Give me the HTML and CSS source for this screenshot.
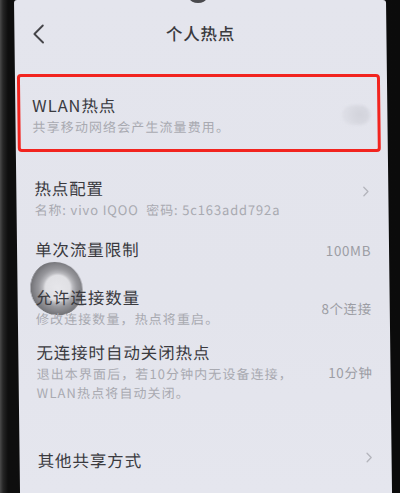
FILE: index.html
```html
<!DOCTYPE html>
<html lang="zh-CN">
<head>
<meta charset="utf-8">
<title>个人热点</title>
<link rel="stylesheet" href="styles.css">
</head>
<body>
<div class="phone">
  <div class="notch"></div>
  <div class="screen">
    <header class="header">
      <svg class="back" width="12" height="20" viewBox="0 0 12 20"><path d="M10.5 1.5 L2 10 L10.5 18.5" fill="none" stroke="#46464a" stroke-width="1.9" stroke-linecap="round" stroke-linejoin="round"/></svg>
      <h1 class="title">个人热点</h1>
      <span class="spacer"></span>
    </header>

    <div class="hl-box">
      <div class="item-text">
        <div class="item-title">WLAN热点</div>
        <div class="item-sub">共享移动网络会产生流量费用。</div>
      </div>
      <div class="toggle"></div>
    </div>

    <div class="row r-config">
      <div class="item-text">
        <div class="item-title">热点配置</div>
        <div class="item-sub sub-latin">名称: vivo IQOO&nbsp;&nbsp;密码: 5c163add792a</div>
      </div>
      <svg class="chev" width="7" height="11" viewBox="0 0 7 11"><path d="M1.5 1.2 L5.6 5.5 L1.5 9.8" fill="none" stroke="#b4b5bc" stroke-width="1.3" stroke-linecap="round" stroke-linejoin="round"/></svg>
    </div>

    <div class="row r-limit">
      <div class="item-text">
        <div class="item-title">单次流量限制</div>
      </div>
      <span class="value">100MB</span>
    </div>

    <div class="row r-count">
      <div class="item-text">
        <div class="item-title">允许连接数量</div>
        <div class="item-sub">修改连接数量，热点将重启。</div>
      </div>
      <span class="value">8个连接</span>
    </div>

    <div class="row r-auto">
      <div class="item-text">
        <div class="item-title">无连接时自动关闭热点</div>
        <div class="item-sub">退出本界面后，若10分钟内无设备连接，<br>WLAN热点将自动关闭。</div>
      </div>
      <span class="value">10分钟</span>
    </div>

    <div class="row r-other">
      <div class="item-text">
        <div class="item-title">其他共享方式</div>
      </div>
      <svg class="chev" width="7" height="11" viewBox="0 0 7 11"><path d="M1.5 1.2 L5.6 5.5 L1.5 9.8" fill="none" stroke="#b4b5bc" stroke-width="1.3" stroke-linecap="round" stroke-linejoin="round"/></svg>
    </div>

    <div class="touch"></div>
  </div>
</div>
</body>
</html>
```

FILE: styles.css
```css
html, body {
  margin: 0;
  padding: 0;
}
body {
  width: 400px;
  height: 493px;
  overflow: hidden;
  background: linear-gradient(to right, #4a4a4a 0, #262626 3px, #0e0e0e 8px, #0b0b0b 100%);
  font-family: "Noto Sans CJK SC", "Noto Sans", sans-serif;
}
.phone {
  position: relative;
  width: 400px;
  height: 493px;
  overflow: hidden;
}
.notch {
  position: absolute;
  left: 190px;
  top: -5px;
  width: 16px;
  height: 8px;
  border-radius: 50%;
  background: #4a4a4e;
  z-index: 3;
  filter: blur(0.6px);
}
.screen {
  position: relative;
  margin-left: 14px;
  width: 372px;
  height: 493px;
  overflow: hidden;
  background: linear-gradient(to bottom, #e4e5ed 0, #e3e4ec 60%, #e5e6ee 100%);
  transform: skewX(0.7deg);
  transform-origin: top left;
  border-radius: 3px 3px 0 0;
  color: #38383d;
}
.header {
  height: 66px;
  display: grid;
  grid-template-columns: 1fr auto 1fr;
  align-items: center;
  padding: 0 18px;
}
.back {
  display: block;
  margin-top: 2px;
}
.title {
  margin: 0;
  font-size: 16.5px;
  font-weight: 500;
  letter-spacing: 0.8px;
  color: #3a3a3f;
  line-height: 22px;
}
.hl-box {
  margin: 8px 0 0 2px;
  width: 363px;
  height: 78px;
  box-sizing: border-box;
  border: 3px solid #f2241f;
  border-radius: 4px;
  padding: 17px 7px 13px 12px;
  display: flex;
  align-items: center;
  justify-content: space-between;
}
.item-text {
  display: flex;
  flex-direction: column;
  white-space: nowrap;
}
.item-title {
  font-size: 16.5px;
  line-height: 21px;
  letter-spacing: 0.9px;
  color: #3a3a3f;
}
.item-sub {
  margin-top: 1px;
  font-size: 13px;
  line-height: 19px;
  letter-spacing: 1.1px;
  color: #a9aab1;
}
.sub-latin {
  letter-spacing: 0.85px;
}
.toggle {
  width: 28px;
  height: 20px;
  border-radius: 10px;
  background: radial-gradient(circle at 65% 50%, #d2d3db 0, #d7d8e0 8px, #dcdde5 14px);
  filter: blur(1.4px);
}
.row {
  position: relative;
  z-index: 1;
  display: flex;
  align-items: center;
  justify-content: space-between;
  padding-left: 18px;
  padding-right: 18px;
}
.r-config { padding-top: 26px; padding-bottom: 10px; }
.r-limit { padding-top: 10px; padding-bottom: 13px; }
.r-count { padding-top: 14px; padding-bottom: 7px; }
.r-auto { padding-top: 7px; padding-bottom: 10px; }
.r-other { padding-top: 38px; padding-bottom: 10px; }
.value {
  font-size: 13.5px;
  letter-spacing: 0.6px;
  color: #9c9da4;
  white-space: nowrap;
}
.chev {
  display: block;
  margin-right: 1px;
}
.r-config .chev { margin-top: -14px; }
.r-other .chev { margin-top: -6px; }
.touch {
  position: absolute;
  left: 10px;
  top: 262px;
  width: 55px;
  height: 55px;
  border-radius: 50%;
  background:
    radial-gradient(circle at 55% 47%, #e6e6ea 0, #e0e0e4 12.5px, #b6b6bb 15px, #949499 19px, #7c7c81 24px, #6c6c70 27px, rgba(108,108,112,0) 27.6px);
  filter: blur(0.6px);
  z-index: 0;
  opacity: 0.95;
}
```
